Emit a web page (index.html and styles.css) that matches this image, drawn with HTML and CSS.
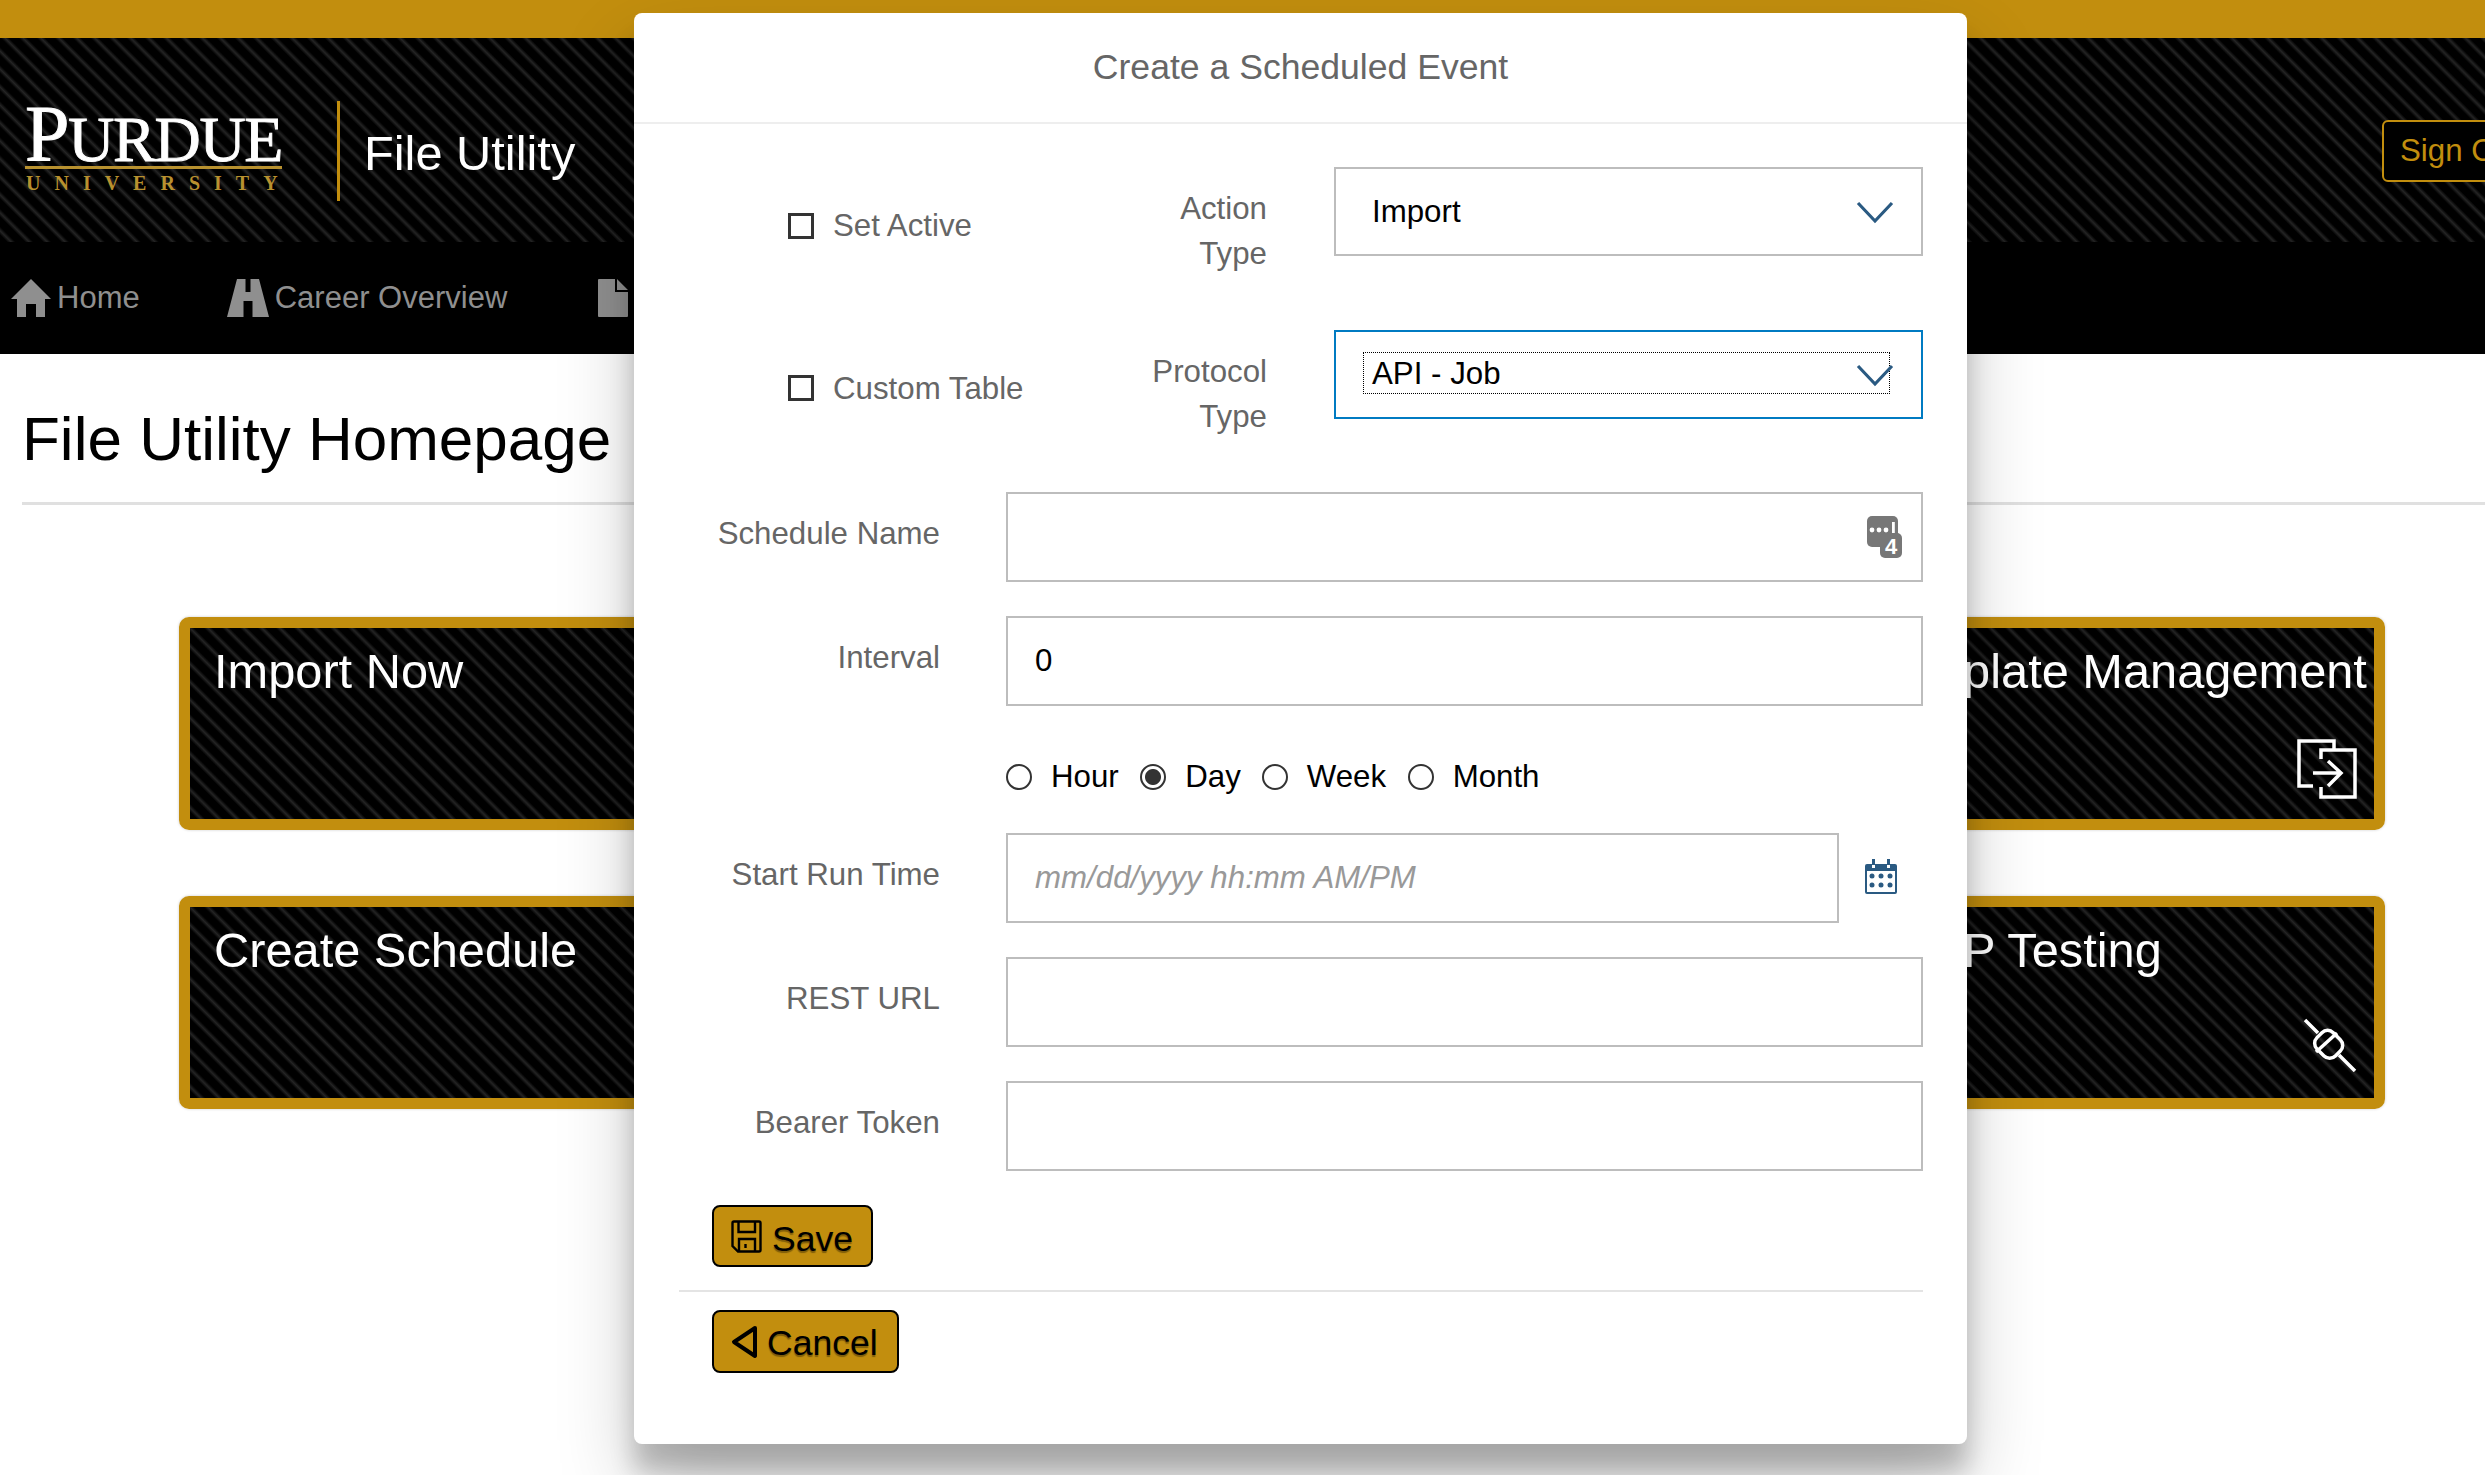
FILE: index.html
```html
<!DOCTYPE html>
<html lang="en">
<head>
  <meta charset="UTF-8">
  <title>File Utility</title>
  <link rel="stylesheet" href="styles.css">
</head>
<body>
  <div class="top-bar"></div>

  <header class="site-header">
    <div class="logo">
      <div class="logo-name"><span class="logo-cap">P</span>URDUE</div>
      <div class="logo-sub">UNIVERSITY</div>
    </div>
    <div class="app-name">File Utility</div>
    <button class="sign-out">Sign Out</button>
  </header>

  <nav class="main-nav">
    <a class="nav-item nav-home">
      <svg class="nav-icon" width="40" height="38" viewBox="0 0 40 38"><path d="M20 0 L40 20 H34 V38 H25 V25 H15 V38 H6 V20 H0 Z" fill="#8f8f8f"/></svg>
      Home
    </a>
    <a class="nav-item nav-career">
      <svg class="nav-icon" width="42" height="38" viewBox="0 0 42 38"><path d="M10 0 H18.5 V13 H23.5 V0 H32 L42 38 H25.5 V22 H16.5 V38 H0 Z" fill="#8f8f8f"/></svg>
      Career Overview
    </a>
    <a class="nav-item nav-doc">
      <svg class="nav-icon" width="30" height="38" viewBox="0 0 30 38"><path d="M1 0 H17 V13 H30 V37 Q30 38 29 38 H1 Q0 38 0 37 V1 Q0 0 1 0 Z M19 0 L30 11 H19 Z" fill="#8f8f8f"/></svg>
    </a>
  </nav>

  <main class="page">
    <h1 class="page-title">File Utility Homepage</h1>

    <div class="card-grid">
      <div class="card">
        <div class="card-title">Import Now</div>
      </div>
      <div class="card">
        <div class="card-title">Template Management</div>
        <svg class="card-icon" width="60" height="60" viewBox="0 0 60 60" fill="none" stroke="#fff" stroke-width="3.5">
          <path d="M37 11 V2 H2 V47 H16"/>
          <path d="M24 20 V11 H58 V58 H24 V48"/>
          <path d="M16 34 H44 M31 22 L44 34 L31 47"/>
        </svg>
      </div>
      <div class="card">
        <div class="card-title">Create Schedule</div>
      </div>
      <div class="card">
        <div class="card-title">SFTP Testing</div>
        <svg class="card-icon card-icon-plug" width="54" height="54" viewBox="0 0 54 54" fill="none" stroke="#fff" stroke-width="3.5">
          <path d="M2 2 L15 15 M36 37 L52 53"/>
          <rect x="13" y="15" width="26" height="23" rx="8" transform="rotate(45 26 26)"/>
          <path d="M13 34 L34 15"/>
        </svg>
      </div>
    </div>
  </main>

  <div class="modal">
    <div class="modal-head">Create a Scheduled Event</div>

    <div class="modal-body">
      <div class="toggle-row">
        <label class="check"><input type="checkbox"> Set Active</label>
        <div class="toggle-label">Action<br>Type</div>
        <div class="select-box">
          <span>Import</span>
          <svg class="chevron" width="38" height="23" viewBox="0 0 38 23" fill="none" stroke="#2a5a82" stroke-width="3.2"><path d="M2 2 L19 20 L36 2"/></svg>
        </div>
      </div>

      <div class="toggle-row">
        <label class="check"><input type="checkbox"> Custom Table</label>
        <div class="toggle-label">Protocol<br>Type</div>
        <div class="select-box select-focus">
          <span class="focus-ring">API - Job</span>
          <svg class="chevron" width="38" height="23" viewBox="0 0 38 23" fill="none" stroke="#2a5a82" stroke-width="3.2"><path d="M2 2 L19 20 L36 2"/></svg>
        </div>
      </div>

      <div class="field-row">
        <label class="field-label">Schedule Name</label>
        <div class="input-wrap">
          <input class="text-input" type="text">
          <svg class="pass-icon" width="36" height="42" viewBox="0 0 36 42">
            <rect x="0" y="0" width="31" height="31" rx="5" fill="#777"/>
            <rect x="13" y="17" width="22" height="25" rx="5" fill="#777"/>
            <circle cx="5" cy="14" r="2.4" fill="#fff"/><circle cx="12" cy="14" r="2.4" fill="#fff"/><circle cx="19" cy="14" r="2.4" fill="#fff"/>
            <rect x="25" y="6" width="2.8" height="11" fill="#fff"/>
            <text x="24" y="38" class="pass-num">4</text>
          </svg>
        </div>
      </div>

      <div class="field-row">
        <label class="field-label">Interval</label>
        <input class="text-input" type="text" value="0">
      </div>

      <div class="radio-row">
        <label class="radio radio-hour"><input type="radio" name="unit"> Hour</label>
        <label class="radio radio-day"><input type="radio" name="unit" checked> Day</label>
        <label class="radio radio-week"><input type="radio" name="unit"> Week</label>
        <label class="radio"><input type="radio" name="unit"> Month</label>
      </div>

      <div class="field-row">
        <label class="field-label">Start Run Time</label>
        <div class="date-wrap">
          <input class="text-input" type="text" placeholder="mm/dd/yyyy hh:mm AM/PM">
          <svg class="cal-icon" width="32" height="35" viewBox="0 0 32 35">
            <path d="M2 5 H30 Q32 5 32 7 V33 Q32 35 30 35 H2 Q0 35 0 33 V7 Q0 5 2 5 Z M2 12 V33 H30 V12 Z" fill="#2a5a82" fill-rule="evenodd"/>
            <rect x="7" y="0" width="3" height="9" fill="#2a5a82"/><rect x="22" y="0" width="3" height="9" fill="#2a5a82"/>
            <rect x="7" y="6" width="3" height="3" fill="#fff"/><rect x="22" y="6" width="3" height="3" fill="#fff"/>
            <g fill="#2a5a82">
              <circle cx="7" cy="17" r="2.5"/><circle cx="16" cy="17" r="2.5"/><circle cx="25" cy="17" r="2.5"/>
              <circle cx="7" cy="26" r="2.5"/><circle cx="16" cy="26" r="2.5"/><circle cx="25" cy="26" r="2.5"/>
            </g>
          </svg>
        </div>
      </div>

      <div class="field-row">
        <label class="field-label">REST URL</label>
        <input class="text-input" type="text">
      </div>

      <div class="field-row">
        <label class="field-label">Bearer Token</label>
        <input class="text-input" type="text">
      </div>

      <button class="gold-btn btn-save">
        <svg width="31" height="33" viewBox="0 0 31 33" fill="none" stroke="#000" stroke-width="2.4">
          <path d="M3 1.5 H28 Q29.5 1.5 29.5 3 V30 Q29.5 31.5 28 31.5 H7 L1.5 26 V3 Q1.5 1.5 3 1.5 Z"/>
          <path d="M7.5 1.5 V12 H24 V1.5"/>
          <path d="M8 31.5 V19 H24 V31.5 M14.5 24 V28"/>
        </svg>
        <span class="btn-text">Save</span>
      </button>

      <div class="modal-rule"></div>

      <button class="gold-btn btn-cancel">
        <svg width="26" height="34" viewBox="0 0 26 34" fill="none" stroke="#000" stroke-width="4" stroke-linejoin="round"><path d="M24 3 L3 17 L24 31 Z"/></svg>
        <span class="btn-text">Cancel</span>
      </button>
    </div>
  </div>
</body>
</html>
```

FILE: styles.css
```css
html, body {
  margin: 0;
  padding: 0;
  height: 100%;
  overflow: hidden;
}

body {
  position: relative;
  background: #fff;
  color: #000;
  font-family: "Liberation Sans", Arial, sans-serif;
  font-size: 31.25px;
}

/* Header */
.top-bar {
  height: 38px;
  background: #c28e0e;
}

.site-header {
  height: 204px;
  box-sizing: border-box;
  display: flex;
  align-items: center;
  padding: 22px 0 0 25px;
  background: repeating-linear-gradient(45deg, #000 0, #000 5px, #242424 8px, #000 11px, #000 12.7px);
}

.logo {
  width: 257px;
  padding-right: 55px;
}

.logo-name {
  color: #fff;
  font-family: "Liberation Serif", serif;
  font-size: 64px;
  line-height: 52px;
  letter-spacing: -1.3px;
  white-space: nowrap;
  border-bottom: 3px solid #b8912f;
  -webkit-text-stroke: 0.9px #fff;
}

.logo-cap {
  font-size: 80px;
}

.logo-sub {
  color: #b8912f;
  font-family: "Liberation Serif", serif;
  font-weight: bold;
  font-size: 20px;
  line-height: 22px;
  margin: 3.5px 0 0 1px;
  letter-spacing: 14px;
  white-space: nowrap;
}

.app-name {
  color: #fff;
  font-size: 48.75px;
  height: 100px;
  line-height: 105px;
  border-left: 3px solid #c28e0e;
  padding-left: 24px;
}

.sign-out {
  margin-left: auto;
  margin-right: -59px;
  width: 162px;
  height: 62px;
  flex-shrink: 0;
  padding: 0 0 0 16px;
  text-align: left;
  white-space: nowrap;
  background: #000;
  color: #c28e0e;
  border: 2px solid #c28e0e;
  border-radius: 6px;
  font: inherit;
}

.main-nav {
  height: 112px;
  background: #000;
  display: flex;
  align-items: center;
}

.nav-item {
  display: flex;
  align-items: center;
  color: #8f8f8f;
  gap: 6px;
  font-size: 31px;
}

.nav-home {
  margin-left: 11px;
}

.nav-career {
  margin-left: 87px;
}

.nav-doc {
  margin-left: 91px;
}

/* Page */
.page {
  padding: 0 0 0 22px;
}

.page-title {
  margin: 0;
  padding: 50px 0 28px;
  font-size: 62px;
  line-height: 70px;
  font-weight: normal;
  border-bottom: 3px solid #e0e0e0;
}

.card-grid {
  display: grid;
  grid-template-columns: 549px 549px;
  justify-content: space-between;
  row-gap: 66px;
  margin: 112px 100px 0 157px;
}

.card {
  position: relative;
  height: 213px;
  box-sizing: border-box;
  border: 11px solid #c28e0e;
  border-radius: 10px;
  padding: 15px 0 0 24px;
  background: repeating-linear-gradient(45deg, #000 0, #000 5px, #242424 8px, #000 11px, #000 12.7px);
  box-shadow: 0 0 3px rgba(0, 0, 0, 0.2);
}

.card-title {
  color: #fff;
  font-size: 48.75px;
  line-height: 56px;
  white-space: nowrap;
}

.card-icon {
  position: absolute;
  right: 17px;
  bottom: 20px;
}

.card-icon-plug {
  bottom: 26px;
}

/* Modal */
.modal {
  position: absolute;
  left: 634px;
  top: 13px;
  width: 1333px;
  height: 1431px;
  background: #fff;
  border-radius: 8px;
  box-shadow: 0 27px 24px 0 rgba(0, 0, 0, 0.2), 0 40px 77px 0 rgba(0, 0, 0, 0.22);
}

.modal-head {
  height: 109px;
  line-height: 108px;
  text-align: center;
  color: #666;
  font-size: 35.6px;
  border-bottom: 2px solid #eee;
}

.modal-body {
  padding: 43px 44px 0 45px;
}

.toggle-row {
  display: grid;
  grid-template-columns: minmax(0, 1fr) 180px 589px;
  column-gap: 67px;
  align-items: start;
  padding-left: 109px;
  margin-bottom: 53.5px;
  color: #666;
  line-height: 45px;
}

.check {
  display: flex;
  align-items: center;
  gap: 19px;
  padding-top: 36px;
  white-space: nowrap;
}

.check input {
  appearance: none;
  flex-shrink: 0;
  margin: 0;
  width: 26px;
  height: 26px;
  box-sizing: border-box;
  border: 3px solid #333;
  background: #fff;
}

.toggle-label {
  text-align: right;
  padding-top: 19px;
}

.select-box {
  position: relative;
  height: 89px;
  box-sizing: border-box;
  border: 2.5px solid #bdbdbd;
  display: flex;
  align-items: center;
  padding-left: 36px;
  color: #000;
}

.select-focus {
  border-color: #007bc2;
}

.focus-ring {
  position: absolute;
  left: 27px;
  right: 31px;
  top: 20px;
  height: 42px;
  line-height: 42px;
  padding-left: 8px;
  box-sizing: border-box;
  border: 1px dotted #000;
}

.chevron {
  position: absolute;
  right: 27px;
  top: 32px;
}

.field-row {
  display: grid;
  grid-template-columns: 261px 917px;
  column-gap: 66px;
  align-items: start;
  margin-bottom: 34px;
}

.field-label {
  text-align: right;
  color: #666;
  line-height: 45px;
  padding-top: 19px;
}

.text-input {
  display: block;
  width: 100%;
  height: 90px;
  box-sizing: border-box;
  border: 2.5px solid #bdbdbd;
  border-radius: 0;
  padding: 0 60px 0 27px;
  background: #fff;
  color: #000;
  font: inherit;
  outline: none;
}

.text-input::placeholder {
  color: #999;
  font-style: italic;
}

.input-wrap {
  position: relative;
}

.pass-icon {
  position: absolute;
  right: 20px;
  top: 24px;
}

.pass-num {
  fill: #fff;
  font-family: "Liberation Sans", Arial, sans-serif;
  font-size: 22px;
  font-weight: bold;
  text-anchor: middle;
}

.radio-row {
  display: flex;
  align-items: center;
  height: 74px;
  margin: 1px 0 19px 327px;
}

.radio {
  display: flex;
  align-items: center;
  gap: 19px;
}

.radio-hour {
  margin-right: 21.5px;
}

.radio-day {
  margin-right: 21px;
}

.radio-week {
  margin-right: 21.5px;
}

.radio input {
  appearance: none;
  margin: 0;
  width: 26px;
  height: 26px;
  box-sizing: border-box;
  border: 2px solid #333;
  border-radius: 50%;
  background: #fff;
}

.radio input:checked {
  background: radial-gradient(circle, #333 0, #333 7.5px, #fff 8.5px);
}

.date-wrap {
  display: flex;
  align-items: center;
  gap: 26px;
}

.date-wrap .text-input {
  width: 833px;
  flex-shrink: 0;
}

.cal-icon {
  flex-shrink: 0;
  margin-top: -3px;
}

.gold-btn {
  display: flex;
  align-items: center;
  gap: 10px;
  box-sizing: border-box;
  background: #c28e0e;
  color: #000;
  border: 2.5px solid #000;
  border-radius: 8px;
  font-family: inherit;
  font-size: 35.6px;
  padding: 0 0 0 17px;
  margin-left: 33px;
  text-shadow: 0 2px 1px rgba(0, 0, 0, 0.35);
}

.btn-text {
  padding-top: 4px;
}

.btn-save .btn-text {
  padding-top: 7px;
}

.btn-save {
  width: 161px;
  height: 62px;
}

.btn-cancel {
  width: 187px;
  height: 63px;
}

.modal-rule {
  border-top: 2px solid #e4e4e4;
  margin: 23px 0 18px;
}
```
